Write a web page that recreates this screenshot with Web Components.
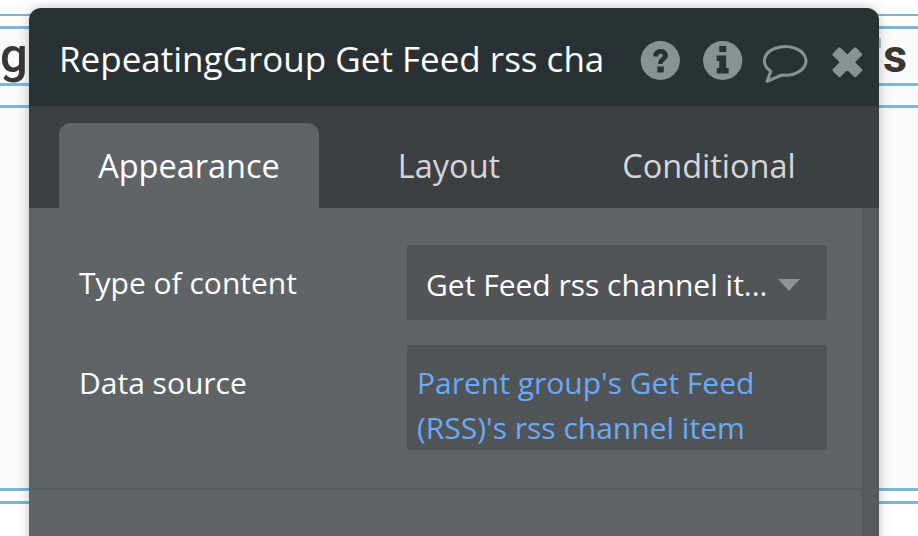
<!DOCTYPE html>
<html>
<head>
<meta charset="utf-8">
<style>
  html, body { margin: 0; padding: 0; height: 100%; overflow: hidden; background: #fff; }
</style>
</head>
<body>
<editor-canvas>
  <property-panel title="RepeatingGroup Get Feed rss cha">
    <panel-tab slot="tabs" active>Appearance</panel-tab>
    <panel-tab slot="tabs">Layout</panel-tab>
    <panel-tab slot="tabs">Conditional</panel-tab>
    <field-row label="Type of content">
      <drop-down>Get Feed rss channel it...</drop-down>
    </field-row>
    <field-row label="Data source">
      <dynamic-box>Parent group's Get Feed (RSS)'s rss channel item</dynamic-box>
    </field-row>
  </property-panel>
</editor-canvas>

<script>
class EditorCanvas extends HTMLElement {
  constructor() {
    super();
    this.attachShadow({ mode: "open" });
    this.shadowRoot.innerHTML = `
      <style>
        :host { display: block; position: relative; width: 918px; height: 536px; overflow: hidden; background: #fff; }
        .tint { position: absolute; left: 0; right: 0; top: 26px; height: 463px; background: #fafafa; }
        .line { position: absolute; left: 0; right: 0; height: 2.5px; background: #7ab8d8; }
        .word {
          position: absolute; top: 24px;
          font: 500 49px/64px Roboto, "Liberation Sans", sans-serif; color: #3a3634;
        }
        .word.bold { font-weight: 700; font-size: 47px; }
        .sliver { position: absolute; left: 879px; top: 38px; width: 2px; height: 10px; background: #a9c6d6; }
      </style>
      <div class="tint"></div>
      <div class="line" style="top:13.5px"></div>
      <div class="line" style="top:26px"></div>
      <div class="line" style="top:83px"></div>
      <div class="line" style="top:105px"></div>
      <div class="line" style="top:488px"></div>
      <div class="line" style="top:501px"></div>
      <div class="word" style="left:0">g</div>
      <div class="word bold" style="left:883px">s</div>
      <div class="sliver"></div>
      <slot></slot>
    `;
  }
}

class PropertyPanel extends HTMLElement {
  constructor() {
    super();
    this.attachShadow({ mode: "open" });
    this.shadowRoot.innerHTML = `
      <style>
        :host {
          position: absolute; left: 29px; top: 8px; width: 850px; height: 560px;
          display: flex; flex-direction: column;
          border-radius: 12px 12px 0 0; overflow: hidden;
          font-family: "Open Sans", sans-serif;
          box-shadow: 0 0 12px rgba(0,0,0,.25);
        }
        header {
          flex: none; height: 98px; background: #2a3134; color: #fff;
          display: flex; align-items: center; position: relative;
        }
        .title {
          margin-left: 30px; white-space: nowrap;
          font-size: 35px; line-height: 48px; margin-top: 4px;
        }
        .icons { position: absolute; left: 0; top: 0; }
        nav {
          flex: none; height: 102px; background: #3c4043;
          display: flex; align-items: flex-end; padding-left: 30px;
        }
        main { flex: 1; display: flex; background: #5f6467; }
        .body { flex: 1; padding: 37px 35px 0 50px; display: flex; flex-direction: column; gap: 25px; position: relative; }
        .rule { position: absolute; left: 0; right: 0; top: 280px; height: 2px; background: #575b5e; }
        .bar { flex: none; width: 17px; background: #565a5d; }
      </style>
      <header>
        <div class="title">${this.getAttribute("title")}</div>
        <svg class="icons" width="850" height="98" viewBox="0 0 850 98">
          <circle cx="631.3" cy="52.5" r="19.6" fill="#8a9195"/>
          <path d="M624.8 48c0-4.2 3-6.500 6.800-6.500 3.900 0 6.700 2.400 6.700 5.900 0 5-5.300 4.900-5.300 8.100h-3.400c0-5.300 4.900-5 4.900-8 0-1.500-1.200-2.600-2.900-2.600-1.800 0-3 1.200-3.100 3.100z" fill="#2a3134" stroke="#2a3134" stroke-width="1.200"/>
          <rect x="628.300" y="58.500" width="6.500" height="6" fill="#2a3134"/>
          <circle cx="693.700" cy="52.500" r="19.600" fill="#8a9195"/>
          <rect x="690.200" y="38" width="7" height="6" fill="#2a3134"/>
          <path d="M687.700 47.500h9.500v12.500h2.500v5.500h-12v-5.500h2.500v-7h-2.500z" fill="#2a3134"/>
          <path d="M753 67A20.800 14.300 0 1 0 741.800 63.200L738 73.300z" fill="none" stroke="#8a9195" stroke-width="3" stroke-linejoin="round"/>
          <path transform="translate(818.300 54.300) rotate(45)" d="M-4-15H4V-4H15V4H4V15H-4V4H-15V-4H-4z" fill="#8a9195" stroke="#8a9195" stroke-width="3" stroke-linejoin="round"/>
        </svg>
      </header>
      <nav><slot name="tabs"></slot></nav>
      <main>
        <div class="body">
          <slot></slot>
          <div class="rule"></div>
        </div>
        <div class="bar"></div>
      </main>
    `;
  }
}

class PanelTab extends HTMLElement {
  constructor() {
    super();
    this.attachShadow({ mode: "open" });
    this.shadowRoot.innerHTML = `
      <style>
        :host {
          display: flex; align-items: center; justify-content: center;
          width: 260px; height: 85px; box-sizing: border-box;
          font-size: 32.5px; color: #d4d6d7; border-radius: 12px 12px 0 0;
        }
        :host([active]) { background: #5f6467; color: #fff; }
      </style>
      <slot></slot>
    `;
  }
}

class FieldRow extends HTMLElement {
  constructor() {
    super();
    this.attachShadow({ mode: "open" });
    this.shadowRoot.innerHTML = `
      <style>
        :host { display: flex; }
        .label { width: 328px; flex: none; font-size: 30px; line-height: 40px; color: #fff; margin-top: 18px; }
      </style>
      <div class="label">${this.getAttribute("label")}</div>
      <slot></slot>
    `;
  }
}

class DropDown extends HTMLElement {
  constructor() {
    super();
    this.attachShadow({ mode: "open" });
    this.shadowRoot.innerHTML = `
      <style>
        :host {
          display: flex; align-items: center; width: 420px; height: 75px; box-sizing: border-box;
          padding: 4px 0 0 19px; background: #515558; border-radius: 2px; color: #fff;
          font-size: 30px; white-space: nowrap; position: relative;
        }
        .arrow {
          position: absolute; left: 371px; top: 34px; width: 0; height: 0;
          border-left: 11px solid transparent; border-right: 11px solid transparent;
          border-top: 12px solid #8f9396;
        }
      </style>
      <slot></slot><span class="arrow"></span>
    `;
  }
}

class DynamicBox extends HTMLElement {
  constructor() {
    super();
    this.attachShadow({ mode: "open" });
    this.shadowRoot.innerHTML = `
      <style>
        :host {
          display: block; width: 420px; height: 105px; box-sizing: border-box;
          padding: 16px 20px 0 10px; background: #515558; border-radius: 2px; color: #6aaafa;
          font-size: 30px; line-height: 44.5px;
        }
      </style>
      <slot></slot>
    `;
  }
}

customElements.define("editor-canvas", EditorCanvas);
customElements.define("property-panel", PropertyPanel);
customElements.define("panel-tab", PanelTab);
customElements.define("field-row", FieldRow);
customElements.define("drop-down", DropDown);
customElements.define("dynamic-box", DynamicBox);
</script>
</body>
</html>
